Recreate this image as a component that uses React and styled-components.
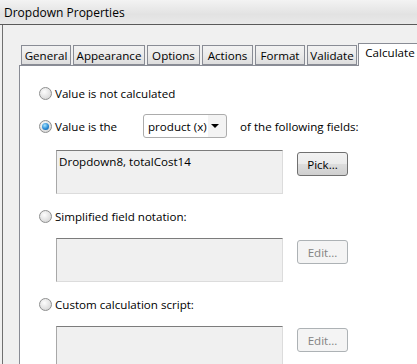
import React, { useState } from "react";
import styled, { createGlobalStyle } from "styled-components";

const GlobalStyle = createGlobalStyle`
  html, body {
    margin: 0;
    padding: 0;
    background: #f0f0f0;
    overflow: hidden;
  }
  body {
    font-family: "Open Sans", "Noto Sans", sans-serif;
    font-size: 11.6px;
    color: #000;
  }
`;

const tabs = [
  { name: "General", width: 50 },
  { name: "Appearance", width: 72 },
  { name: "Options", width: 53 },
  { name: "Actions", width: 51 },
  { name: "Format", width: 50 },
  { name: "Validate", width: 50 },
  { name: "Calculate", width: 68 },
];

const App = () => {
  const [mode, setMode] = useState("value");

  return (
    <StyledWindow>
      <GlobalStyle />
      <TitleBar>Dropdown Properties</TitleBar>
      <Body>
        <TabStrip>
          {tabs.map((t) => (
            <Tab key={t.name} $width={t.width} $active={t.name === "Calculate"}>
              {t.name}
            </Tab>
          ))}
        </TabStrip>
        <Panel>
          <OptionRow onClick={() => setMode("none")}>
            <Radio $checked={mode === "none"} />
            <span>Value is not calculated</span>
          </OptionRow>

          <OptionRow $tall onClick={() => setMode("value")}>
            <Radio $checked={mode === "value"} />
            <FixedLabel>Value is the</FixedLabel>
            <Select>
              <span>product (x)</span>
              <Arrow />
            </Select>
            <AfterText>of the following fields:</AfterText>
          </OptionRow>
          <FieldRow>
            <Field>Dropdown8, totalCost14</Field>
            <Button>Pick...</Button>
          </FieldRow>

          <OptionRow onClick={() => setMode("simple")}>
            <Radio $checked={mode === "simple"} />
            <span>Simplified field notation:</span>
          </OptionRow>
          <FieldRow>
            <Field />
            <Button disabled>Edit...</Button>
          </FieldRow>

          <OptionRow onClick={() => setMode("custom")}>
            <Radio $checked={mode === "custom"} />
            <span>Custom calculation script:</span>
          </OptionRow>
          <FieldRow>
            <Field />
            <Button disabled>Edit...</Button>
          </FieldRow>
        </Panel>
      </Body>
    </StyledWindow>
  );
};

const StyledWindow = styled.div`
  width: 417px;
  height: 364px;
  display: flex;
  flex-direction: column;
  overflow: hidden;
`;

const TitleBar = styled.div`
  flex-shrink: 0;
  height: 25px;
  box-sizing: border-box;
  padding: 4px 0 0 4px;
  font-size: 12px;
  background: linear-gradient(#f3f3f3, #e2e2e2 60%, #e9e9e9);
  border-bottom: 1px solid #5a5a5a;
`;

const Body = styled.div`
  flex: 1;
  min-height: 0;
  overflow: hidden;
  display: flex;
  flex-direction: column;
  margin-left: 2px;
  padding: 17px 0 0 16px;
  border-left: 1px solid #707070;
  background: #f0f0f0;
`;

const TabStrip = styled.div`
  flex-shrink: 0;
  display: flex;
  align-items: flex-end;
  gap: 2px;
  padding-left: 2px;
  height: 23px;
  position: relative;
  z-index: 1;
`;

const Tab = styled.div`
  width: ${(p) => p.$width}px;
  flex-shrink: 0;
  box-sizing: border-box;
  height: ${(p) => (p.$active ? 23 : 20)}px;
  margin-bottom: ${(p) => (p.$active ? -1 : 0)}px;
  margin-left: ${(p) => (p.$active ? -1 : 0)}px;
  padding-top: ${(p) => (p.$active ? 1 : 2)}px;
  padding-right: ${(p) => (p.$active ? 4 : 0)}px;
  text-align: center;
  border: 1px solid #898c95;
  border-bottom: ${(p) => (p.$active ? "none" : "1px solid #898c95")};
  background: ${(p) =>
    p.$active ? "#fff" : "linear-gradient(#f2f2f2, #ebebeb 50%, #dddddd)"};
  white-space: nowrap;
`;

const Panel = styled.div`
  flex: 1;
  min-height: 0;
  display: flex;
  flex-direction: column;
  gap: 12px;
  background: #fff;
  border-top: 1px solid #898c95;
  border-left: 1px solid #898c95;
  padding: 17px 0 0 19px;
  & > * {
    flex-shrink: 0;
  }
`;

const OptionRow = styled.div`
  display: flex;
  align-items: center;
  height: ${(p) => (p.$tall ? 24 : 20)}px;
  gap: 3px;
  margin-top: ${(p) => (p.$tall ? -1 : 0)}px;
  cursor: default;
  white-space: nowrap;
`;

const Radio = styled.span`
  width: 13px;
  height: 13px;
  box-sizing: border-box;
  border-radius: 50%;
  border: 1px solid #8e8f8f;
  background: radial-gradient(circle at 40% 35%, #fdfdfd, #dcdcdc 70%, #c9c9c9);
  display: flex;
  align-items: center;
  justify-content: center;
  flex-shrink: 0;

  &::after {
    content: "";
    display: ${(p) => (p.$checked ? "block" : "none")};
    width: 7px;
    height: 7px;
    border-radius: 50%;
    background: radial-gradient(circle at 40% 35%, #a6e4ff, #2a8ad4 55%, #0d4f8b);
  }
`;

const FixedLabel = styled.span`
  width: 85px;
  flex-shrink: 0;
`;

const Select = styled.div`
  width: 84px;
  height: 24px;
  flex-shrink: 0;
  box-sizing: border-box;
  border: 1px solid #acacac;
  border-radius: 3px;
  background: linear-gradient(to right, #fff 78%, #f3f3f3 78%);
  display: flex;
  align-items: center;
  justify-content: space-between;
  padding: 0 7px 0 4px;
`;

const Arrow = styled.span`
  width: 0;
  height: 0;
  border-left: 4px solid transparent;
  border-right: 4px solid transparent;
  border-top: 4px solid #000;
`;

const AfterText = styled.span`
  margin-left: 10px;
`;

const FieldRow = styled.div`
  display: flex;
  align-items: flex-start;
  gap: 14px;
  padding-left: 17px;
`;

const Field = styled.div`
  width: 227px;
  height: 44px;
  box-sizing: border-box;
  background: #f0f0f0;
  border-top: 1px solid #7c7c7c;
  border-left: 1px solid #a8a8a8;
  border-right: 1px solid #dcdcdc;
  border-bottom: 1px solid #dcdcdc;
  padding: 3px 2px;
  line-height: 16px;
  white-space: nowrap;
`;

const Button = styled.button`
  width: 51px;
  height: 24px;
  margin-top: 2px;
  font-family: inherit;
  font-size: 11.6px;
  border-radius: 3px;
  padding: 0;
  color: ${(p) => (p.disabled ? "#838383" : "#000")};
  border: 1px solid ${(p) => (p.disabled ? "#adb2b5" : "#707070")};
  background: ${(p) =>
    p.disabled ? "#f4f4f4" : "linear-gradient(#f2f2f2, #ebebeb 50%, #dddddd 51%, #cfcfcf)"};
`;

export default App;
